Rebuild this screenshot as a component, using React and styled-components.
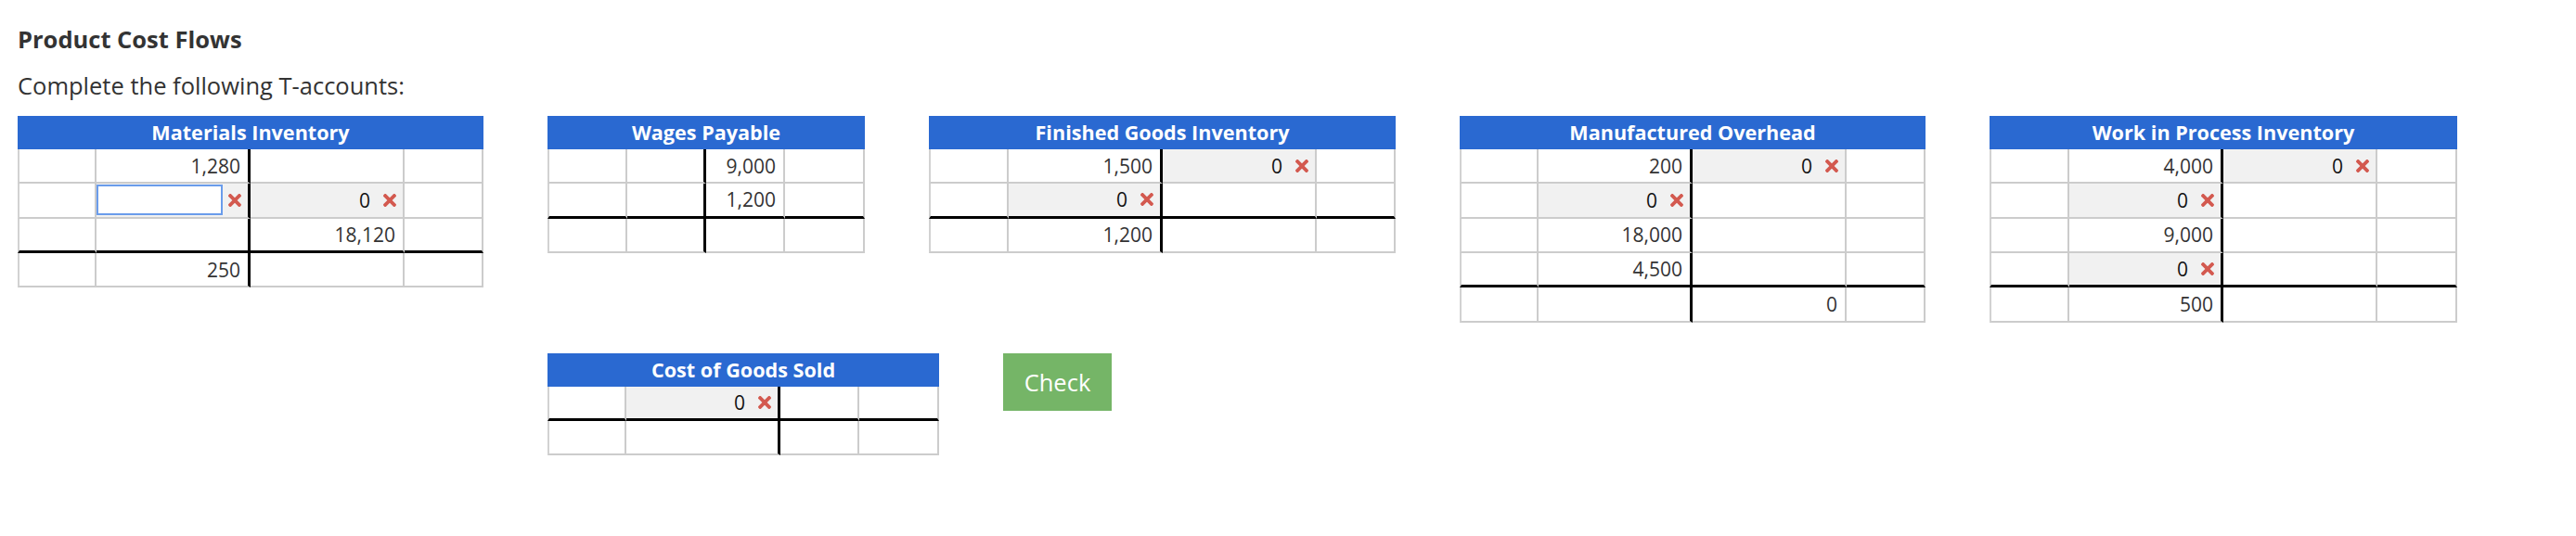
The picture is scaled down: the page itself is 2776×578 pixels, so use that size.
import React from "react";
import styled, { createGlobalStyle } from "styled-components";

const GlobalStyle = createGlobalStyle`
  html, body {
    margin: 0;
    padding: 0;
    background: #ffffff;
  }
  body {
    font-family: "Open Sans", "Liberation Sans", Arial, sans-serif;
    color: #333333;
  }
`;

const Page = styled.div`
  padding: 25px 0 0 19px;
`;

const Title = styled.h1`
  margin: 0;
  font-size: 25.5px;
  line-height: 34px;
  font-weight: 700;
  color: #333333;
`;

const Subtitle = styled.p`
  margin: 16px 0 16px;
  font-size: 25.5px;
  line-height: 34px;
  font-weight: 400;
  color: #333333;
`;

const Board = styled.div`
  display: flex;
  flex-direction: column;
  gap: 33px;
`;

const Row = styled.div`
  display: flex;
  align-items: flex-start;
  gap: 69px;
`;

const Spacer = styled.div`
  width: ${(p) => p.$width}px;
  flex: none;
`;

const Account = styled.div`
  display: grid;
  grid-template-columns: ${(p) => p.$cols.map((c) => `${c}px`).join(" ")};
  flex: none;
`;

const Header = styled.div`
  grid-column: 1 / -1;
  height: 36px;
  background: #2a69d1;
  color: #ffffff;
  font-size: 21.6px;
  font-weight: 700;
  line-height: 36px;
  text-align: center;
  white-space: nowrap;
`;

const Cell = styled.div`
  box-sizing: border-box;
  height: 37.33px;
  display: flex;
  align-items: center;
  justify-content: flex-end;
  padding-right: ${(p) => (p.$error ? 7 : 8)}px;
  font-size: 21px;
  line-height: 28px;
  color: #333333;
  background: ${(p) => (p.$error ? "#f1f1f1" : "#ffffff")};
  border-bottom: ${(p) => (p.$rule ? "3px solid #000000" : "2px solid #cccccc")};
  border-right: ${(p) => (p.$split ? "3px solid #000000" : "2px solid #cccccc")};
  border-left: ${(p) => (p.$first ? "2px solid #d2d2d2" : "0")};
`;

const Entry = styled.span`
  box-sizing: border-box;
  width: 136px;
  height: 33px;
  display: flex;
  align-items: center;
  justify-content: flex-end;
  padding-right: 6px;
  border: 2px solid ${(p) => (p.$active ? "#6a9ceb" : "transparent")};
  background: ${(p) => (p.$active ? "#ffffff" : "transparent")};
  color: #111111;
  font-size: 21px;
`;

const Mark = styled.svg`
  width: 14px;
  height: 14px;
  margin-left: 6px;
  flex: none;
  fill: #d3594f;
`;

const CheckButton = styled.button`
  box-sizing: border-box;
  width: 117px;
  height: 62px;
  margin: 0;
  padding: 0;
  border: 0;
  background: #75b567;
  color: #ffffff;
  font-family: "Open Sans", "Liberation Sans", Arial, sans-serif;
  font-size: 25.5px;
  font-weight: 400;
  line-height: 62px;
  cursor: pointer;
  flex: none;
`;

const XIcon = () => (
  <Mark viewBox="0 80 352 352" aria-hidden="true">
    <path d="M242.72 256l100.07-100.07c12.28-12.28 12.28-32.19 0-44.48l-22.24-22.240c-12.28-12.28-32.19-12.28-44.48 0L176 189.28 75.93 89.21c-12.28-12.28-32.19-12.28-44.48 0L9.21 111.45c-12.28 12.28-12.28 32.19 0 44.48L109.28 256 9.21 356.07c-12.28 12.28-12.28 32.19 0 44.48l22.24 22.24c12.28 12.28 32.2 12.28 44.48 0L176 322.72l100.07 100.07c12.28 12.28 32.2 12.28 44.48 0l22.24-22.24c12.28-12.28 12.28-32.19 0-44.48L242.72 256z" />
  </Mark>
);

const E = (v, active = false) => ({ entry: v, active });
const _ = null;

const WIDE = [85, 166, 166, 85];

const rowOne = [
  {
    title: "Materials Inventory",
    cols: WIDE,
    rows: [
      [_, "1,280", _, _],
      [_, E("", true), E("0"), _],
      [_, _, "18,120", _],
    ],
    total: [_, "250", _, _],
  },
  {
    title: "Wages Payable",
    cols: [86, 85, 85, 86],
    rows: [
      [_, _, "9,000", _],
      [_, _, "1,200", _],
    ],
    total: [_, _, _, _],
  },
  {
    title: "Finished Goods Inventory",
    cols: [86, 166, 166, 85],
    rows: [
      [_, "1,500", E("0"), _],
      [_, E("0"), _, _],
    ],
    total: [_, "1,200", _, _],
  },
  {
    title: "Manufactured Overhead",
    cols: WIDE,
    rows: [
      [_, "200", E("0"), _],
      [_, E("0"), _, _],
      [_, "18,000", _, _],
      [_, "4,500", _, _],
    ],
    total: [_, _, "0", _],
  },
  {
    title: "Work in Process Inventory",
    cols: [86, 166, 166, 86],
    rows: [
      [_, "4,000", E("0"), _],
      [_, E("0"), _, _],
      [_, "9,000", _, _],
      [_, E("0"), _, _],
    ],
    total: [_, "500", _, _],
  },
];

const cogs = {
  title: "Cost of Goods Sold",
  cols: [85, 166, 85, 86],
  rows: [[_, E("0"), _, _]],
  total: [_, _, _, _],
};

function TAccount({ data }) {
  const all = [...data.rows, data.total];
  const lastBody = data.rows.length - 1;
  return (
    <Account $cols={data.cols}>
      <Header>{data.title}</Header>
      {all.map((row, r) =>
        row.map((v, c) => {
          const isEntry = v && typeof v === "object";
          return (
            <Cell
              key={`${r}-${c}`}
              $first={c === 0}
              $split={c === 1}
              $rule={r === lastBody}
              $error={isEntry}
            >
              {isEntry ? (
                <>
                  <Entry $active={v.active}>{v.entry}</Entry>
                  <XIcon />
                </>
              ) : (
                v
              )}
            </Cell>
          );
        })
      )}
    </Account>
  );
}

export default function App() {
  return (
    <>
      <GlobalStyle />
      <Page>
        <Title>Product Cost Flows</Title>
        <Subtitle>Complete the following T-accounts:</Subtitle>
        <Board>
          <Row>
            {rowOne.map((a) => (
              <TAccount key={a.title} data={a} />
            ))}
          </Row>
          <Row>
            <Spacer $width={502} />
            <TAccount data={cogs} />
            <CheckButton type="button">Check</CheckButton>
          </Row>
        </Board>
      </Page>
    </>
  );
}
